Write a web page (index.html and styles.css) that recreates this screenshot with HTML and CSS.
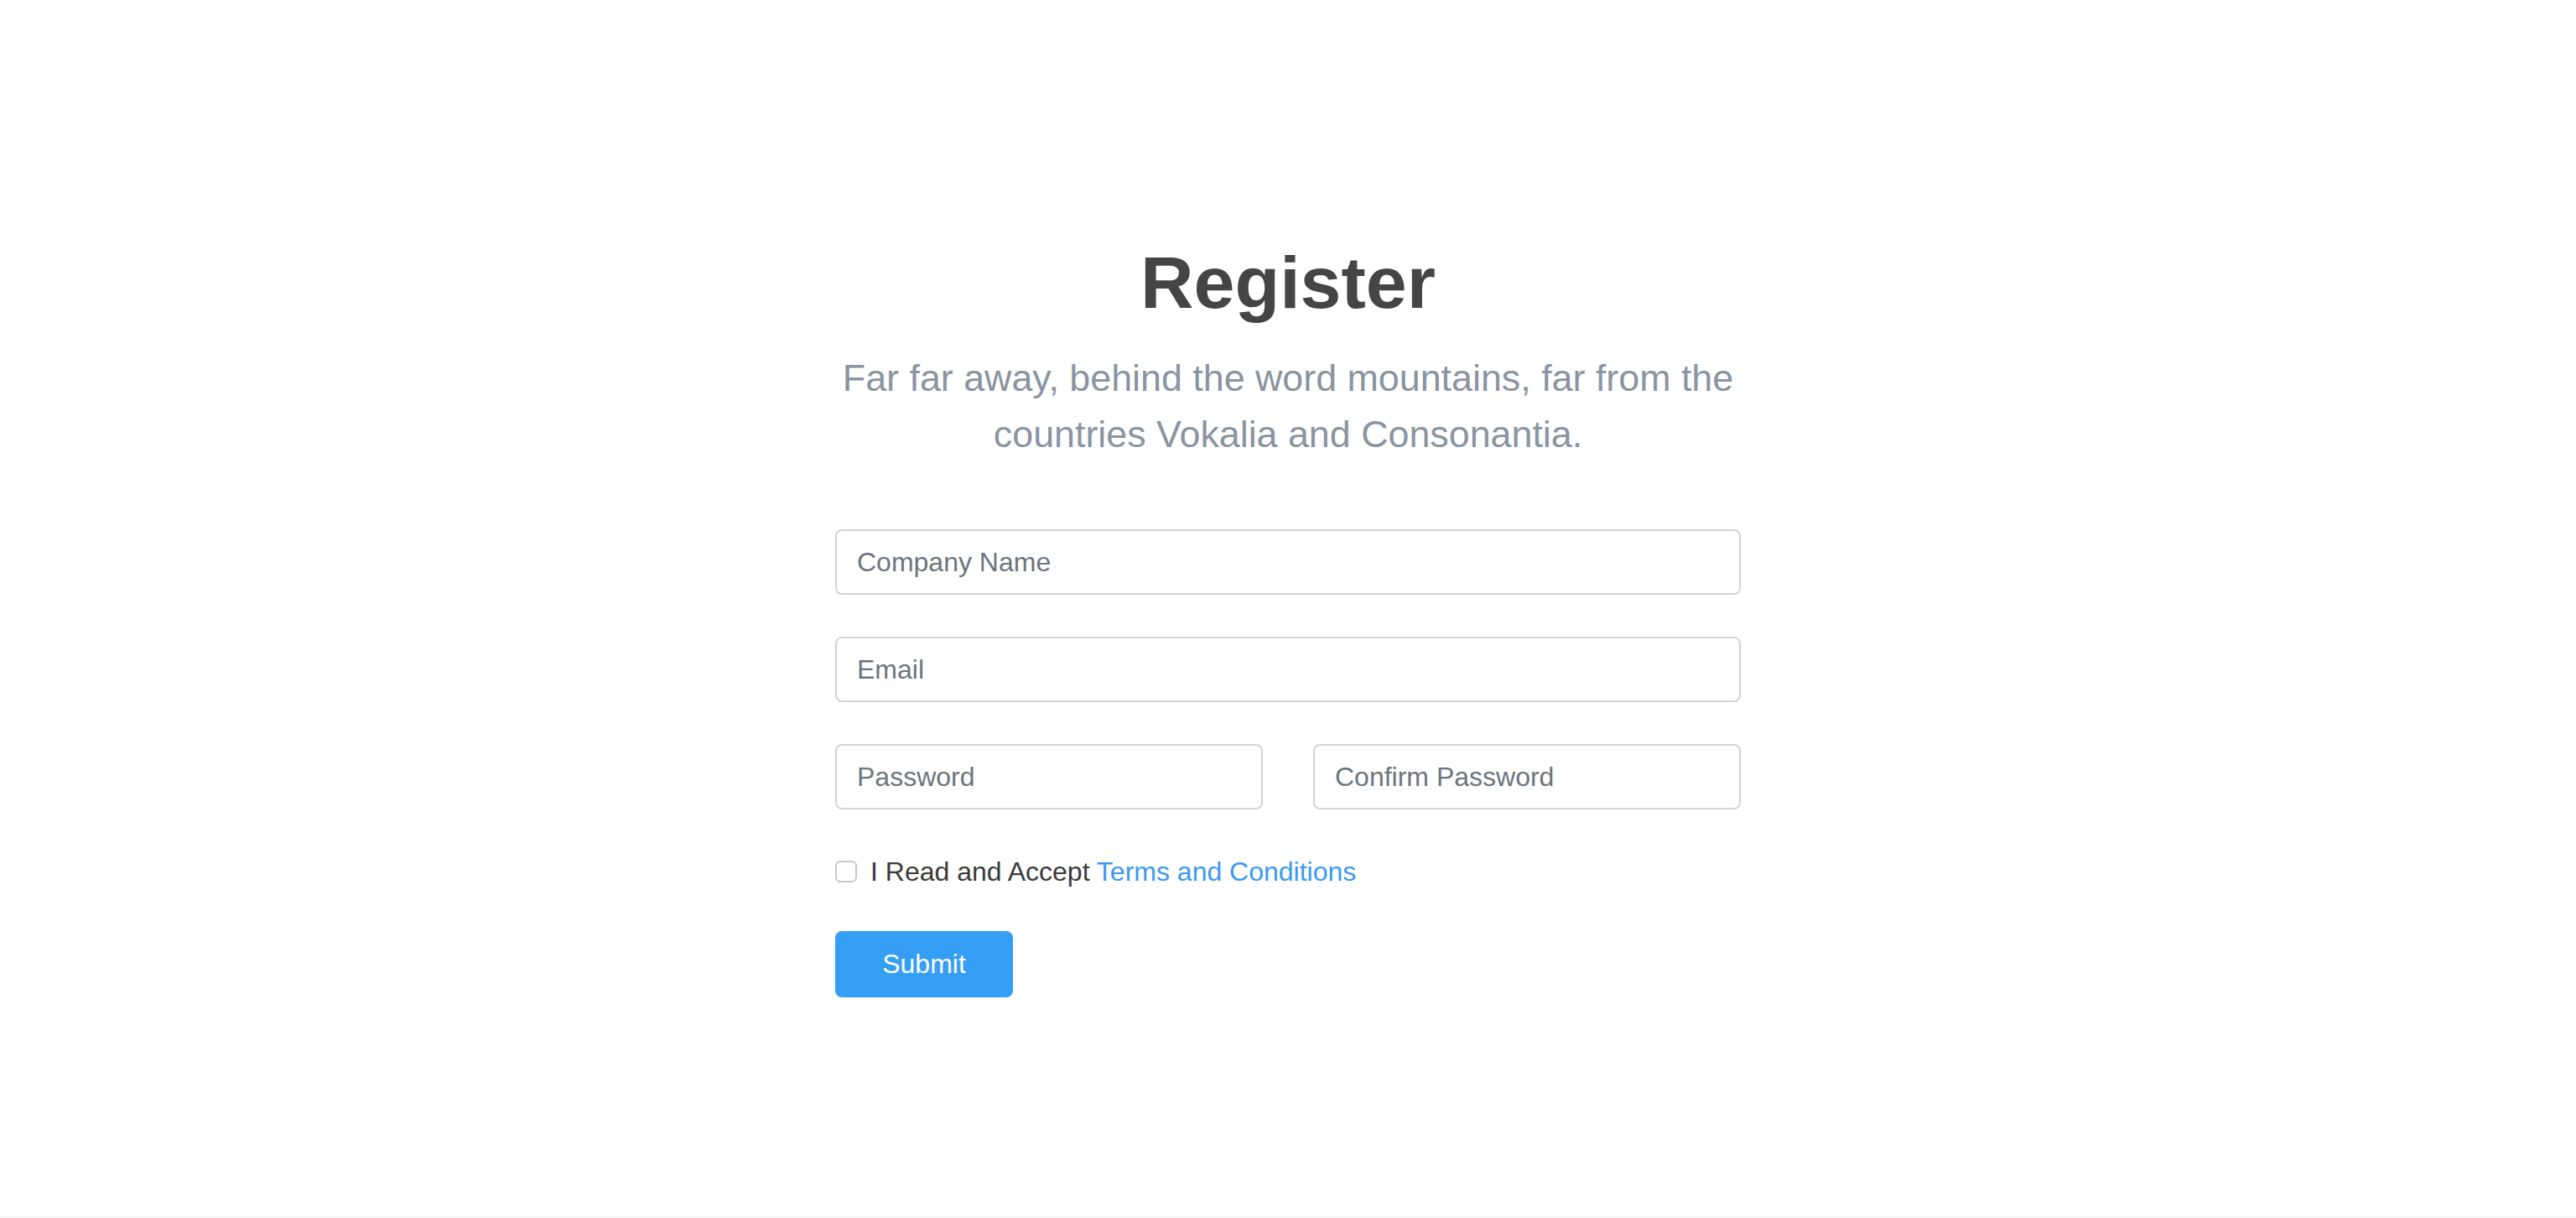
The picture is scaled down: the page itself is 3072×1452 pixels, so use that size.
FILE: index.html
```html
<!DOCTYPE html>
<html lang="en">
<head>
<meta charset="utf-8">
<title>Register</title>
<link rel="stylesheet" href="styles.css">
</head>
<body>
<main class="page">
  <section class="register">
    <h1 class="title">Register</h1>
    <p class="lead">Far far away, behind the word mountains, far from the countries Vokalia and Consonantia.</p>
    <form class="form">
      <input class="field" type="text" placeholder="Company Name">
      <input class="field" type="email" placeholder="Email">
      <div class="row">
        <input class="field" type="password" placeholder="Password">
        <input class="field" type="password" placeholder="Confirm Password">
      </div>
      <label class="check">
        <input class="box" type="checkbox">
        <span>I Read and Accept <a class="link" href="#">Terms and Conditions</a></span>
      </label>
      <div class="actions">
        <button class="btn" type="button">Submit</button>
      </div>
    </form>
  </section>
</main>
</body>
</html>
```

FILE: styles.css
```css
html, body {
  margin: 0;
  padding: 0;
}
body {
  background: #f5f5f5;
  font-family: "Liberation Sans", Arial, Helvetica, sans-serif;
}
.page {
  background: #ffffff;
  height: 1449px;
  padding-top: 284px;
  box-sizing: border-box;
}
.register {
  width: 1080px;
  margin: 0 auto;
  text-align: center;
}
.title {
  margin: 0;
  font-size: 88px;
  line-height: 106px;
  font-weight: 700;
  color: #454545;
}
.lead {
  margin: 27px 0 0;
  font-size: 44.8px;
  line-height: 67px;
  color: #8a94a2;
}
.form {
  margin-top: 80px;
  display: flex;
  flex-direction: column;
  gap: 50px;
  text-align: left;
}
.field {
  display: block;
  width: 100%;
  height: 78px;
  box-sizing: border-box;
  border: 2px solid #ced4da;
  border-radius: 8px;
  padding: 0 24px;
  font-family: inherit;
  font-size: 32px;
  color: #495057;
  background: #fff;
  outline: none;
}
.field::placeholder {
  color: #6c757d;
  opacity: 1;
}
.row {
  display: grid;
  grid-template-columns: 1fr 1fr;
  column-gap: 60px;
}
.check {
  display: flex;
  align-items: center;
  gap: 16px;
  font-size: 32px;
  line-height: 48px;
  color: #3a3a3a;
}
.box {
  appearance: none;
  -webkit-appearance: none;
  margin: 0;
  width: 26px;
  height: 26px;
  border: 2px solid #c8c8c8;
  border-radius: 6px;
  background: #fff;
  flex: none;
}
.link {
  color: #3a9af0;
  text-decoration: none;
}
.actions {
  margin-top: -3px;
}
.btn {
  width: 212px;
  height: 79px;
  padding: 0;
  border: none;
  border-radius: 8px;
  background: #359ef5;
  color: #fff;
  font-family: inherit;
  font-size: 32px;
}
```
